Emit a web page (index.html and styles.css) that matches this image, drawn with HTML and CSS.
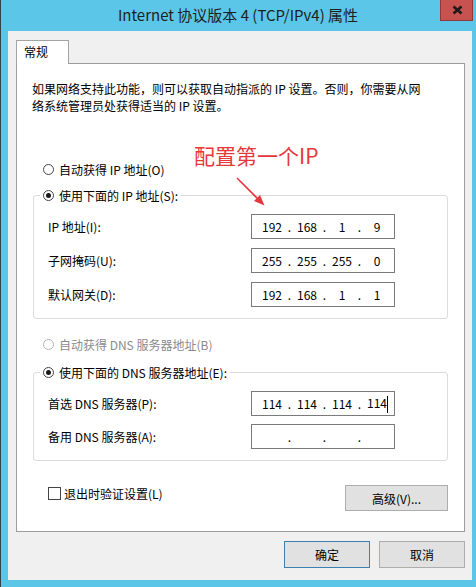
FILE: index.html
```html
<!DOCTYPE html>
<html lang="zh-CN">
<head>
<meta charset="utf-8">
<title>Internet 协议版本 4 (TCP/IPv4) 属性</title>
<link rel="stylesheet" href="styles.css">
</head>
<body>
<div class="window">
  <div class="titlebar">
    <div class="title">Internet 协议版本 4 (TCP/IPv4) 属性</div>
    <div class="close">
      <svg width="33" height="21" viewBox="0 0 33 21"><path d="M13.5 7.5 L21.5 14.5 M21.5 7.5 L13.5 14.5" stroke="#1b1b1b" stroke-width="2.6" fill="none"/></svg>
    </div>
  </div>
  <div class="client">
    <div class="tabs"><div class="tab">常规</div></div>
    <div class="panel">
      <p class="desc">如果网络支持此功能，则可以获取自动指派的 IP 设置。否则，你需要从网<br>络系统管理员处获得适当的 IP 设置。</p>
      <div class="opt opt-auto-ip"><span class="radio"></span><span>自动获得 IP 地址(O)</span></div>
      <fieldset class="group group-ip">
        <legend><span class="radio checked"></span><span>使用下面的 IP 地址(S):</span></legend>
        <div class="field">
          <span class="label">IP 地址(I):</span>
          <div class="ipbox"><span class="seg">192</span><span class="dot">.</span><span class="seg">168</span><span class="dot">.</span><span class="seg">1</span><span class="dot">.</span><span class="seg">9</span></div>
        </div>
        <div class="field">
          <span class="label">子网掩码(U):</span>
          <div class="ipbox"><span class="seg">255</span><span class="dot">.</span><span class="seg">255</span><span class="dot">.</span><span class="seg">255</span><span class="dot">.</span><span class="seg">0</span></div>
        </div>
        <div class="field">
          <span class="label">默认网关(D):</span>
          <div class="ipbox"><span class="seg">192</span><span class="dot">.</span><span class="seg">168</span><span class="dot">.</span><span class="seg">1</span><span class="dot">.</span><span class="seg">1</span></div>
        </div>
      </fieldset>
      <div class="opt opt-auto-dns disabled"><span class="radio"></span><span>自动获得 DNS 服务器地址(B)</span></div>
      <fieldset class="group group-dns">
        <legend><span class="radio checked"></span><span>使用下面的 DNS 服务器地址(E):</span></legend>
        <div class="field">
          <span class="label">首选 DNS 服务器(P):</span>
          <div class="ipbox"><span class="seg">114</span><span class="dot">.</span><span class="seg">114</span><span class="dot">.</span><span class="seg">114</span><span class="dot">.</span><span class="seg">114<span class="caret"></span></span></div>
        </div>
        <div class="field">
          <span class="label">备用 DNS 服务器(A):</span>
          <div class="ipbox"><span class="seg"></span><span class="dot">.</span><span class="seg"></span><span class="dot">.</span><span class="seg"></span><span class="dot">.</span><span class="seg"></span></div>
        </div>
      </fieldset>
      <div class="bottom-row">
        <div class="check"><span class="box"></span><span>退出时验证设置(L)</span></div>
        <div class="btn btn-adv">高级(V)...</div>
      </div>
    </div>
    <div class="actions">
      <div class="btn btn-default">确定</div>
      <div class="btn">取消</div>
    </div>
  </div>
  <div class="note">配置第一个IP</div>
  <svg class="arrow" width="40" height="40" viewBox="230 172 40 40">
    <path d="M236 178 L257.5 199.5" stroke="#e5373c" stroke-width="1.6" fill="none"/>
    <path d="M263.5 205.5 L253 201 L259 195 Z" fill="#e5373c"/>
  </svg>
</div>
</body>
</html>
```

FILE: styles.css
```css
html, body {
  margin: 0;
  padding: 0;
  background: #5cc6e9;
}

body {
  font-family: "Noto Sans CJK SC", "Noto Sans", sans-serif;
  font-size: 12px;
  color: #000;
}

.window {
  position: relative;
  width: 476px;
  height: 587px;
  box-sizing: border-box;
  background: #5cc6e9;
  border-left: 1px solid #33444a;
  padding: 0 4px 7px 7px;
  display: flex;
  flex-direction: column;
}

.titlebar {
  height: 31px;
  flex: none;
}

.title {
  text-align: center;
  line-height: 30px;
  font-size: 15px;
  color: #1e1e1e;
  margin-left: -4px;
}

.close {
  position: absolute;
  top: 0;
  right: 3px;
  width: 33px;
  height: 21px;
  box-sizing: border-box;
  background: #c85250;
  border: 1px solid #8e3a38;
  border-top: none;
}

.close svg {
  display: block;
  margin: -1px 0 0 -1px;
}

.client {
  flex: 1;
  background: #f0f0f0;
  padding: 9px 7px 0 8px;
}

.tabs {
  display: flex;
  position: relative;
  z-index: 1;
  margin-bottom: -1px;
}

.tab {
  width: 53px;
  height: 24px;
  box-sizing: border-box;
  background: #fff;
  border: 1px solid #a3a3a3;
  border-bottom: none;
  padding-left: 7px;
  line-height: 21px;
}

.panel {
  height: 469px;
  box-sizing: border-box;
  background: #fff;
  border: 1px solid #9c9c9c;
  display: flex;
  flex-direction: column;
}

.desc {
  margin: 16px 0 0 15px;
  line-height: 17px;
  white-space: nowrap;
}

.opt {
  display: flex;
  align-items: center;
  height: 16px;
  padding-left: 26px;
}

.opt-auto-ip {
  margin-top: 47px;
}

.opt-auto-dns {
  margin-top: 17px;
}

.disabled {
  color: #8a8a8a;
}

.radio {
  display: inline-block;
  width: 11px;
  height: 11px;
  box-sizing: border-box;
  border: 1px solid #444;
  border-radius: 50%;
  background: #fff;
  margin-right: 5px;
  position: relative;
  flex: none;
}

.disabled .radio {
  border-color: #b5b5b5;
}

.radio.checked::after {
  content: "";
  position: absolute;
  left: 2px;
  top: 2px;
  width: 5px;
  height: 5px;
  border-radius: 50%;
  background: #1a1a1a;
}

.group {
  margin: 0 16px;
  border: 1px solid #dcdcdc;
  border-radius: 3px;
  padding: 11px 14px 11px 14px;
  display: flex;
  flex-direction: column;
  gap: 9px;
}

.group-ip {
  margin-top: 10px;
}

.group-dns {
  margin-top: 12px;
  gap: 8px;
}

.group legend {
  display: flex;
  align-items: center;
  height: 16px;
  padding: 0 3px;
  margin-left: -8px;
}

.field {
  display: grid;
  grid-template-columns: 203px 144px;
  align-items: center;
  height: 25px;
}

.ipbox {
  height: 25px;
  box-sizing: border-box;
  border: 1px solid #7a7a7a;
  background: #fff;
  display: flex;
  align-items: center;
  padding-left: 6px;
}

.seg {
  width: 28px;
  text-align: center;
  position: relative;
}

.dot {
  width: 7px;
  text-align: center;
}

.caret {
  display: inline-block;
  width: 1px;
  height: 17px;
  background: #000;
  vertical-align: middle;
  margin-right: -1px;
}

.bottom-row {
  margin-top: 24px;
  display: flex;
  justify-content: space-between;
  align-items: center;
  padding: 0 16px 0 31px;
}

.check {
  display: flex;
  align-items: center;
  margin-top: -10px;
}

.box {
  display: inline-block;
  width: 13px;
  height: 13px;
  box-sizing: border-box;
  border: 1px solid #444;
  background: #fff;
  margin-right: 3px;
}

.btn {
  height: 27px;
  width: 86px;
  box-sizing: border-box;
  background: #e1e1e1;
  border: 1px solid #adadad;
  display: flex;
  align-items: center;
  justify-content: center;
}

.btn-adv {
  width: 103px;
  height: 26px;
}

.btn-default {
  border-color: #3c7fb1;
}

.actions {
  margin-top: 9px;
  display: flex;
  justify-content: flex-end;
  gap: 9px;
}

.note {
  position: absolute;
  left: 193px;
  top: 142px;
  font-size: 21px;
  line-height: 26px;
  color: #e5373c;
  white-space: nowrap;
}

.arrow {
  position: absolute;
  left: 230px;
  top: 172px;
}
```
